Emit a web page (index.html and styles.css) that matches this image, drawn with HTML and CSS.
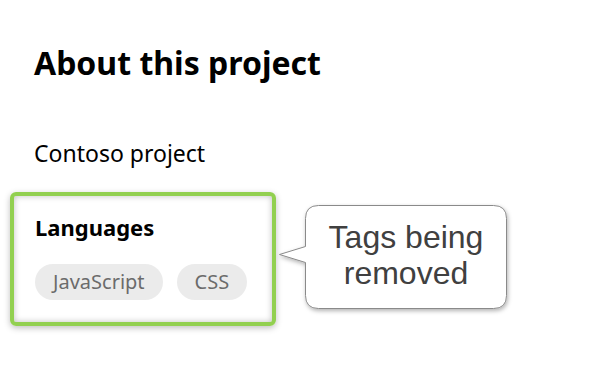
FILE: index.html
```html
<!DOCTYPE html>
<html lang="en">
  <head>
    <meta charset="UTF-8" />
    <meta name="viewport" content="width=device-width, initial-scale=1.0" />
    <title>About this project</title>
    <link rel="stylesheet" href="styles.css">
  </head>
  <body>
    <div class="panel">
      <h1>About this project</h1>
      <p class="name">Contoso project</p>

      <div class="highlight">
        <h2>Languages</h2>
        <div class="tags">
          <span class="tag">JavaScript</span>
          <span class="tag">CSS</span>
        </div>
      </div>

      <div class="callout">
        <svg class="callout-shape" width="240" height="120" viewBox="0 0 240 120">
          <defs>
            <filter id="shadow" x="-10%" y="-10%" width="130%" height="140%">
              <feDropShadow dx="1" dy="2" stdDeviation="2" flood-color="#000" flood-opacity="0.3" />
            </filter>
          </defs>
          <path d="M42.5 2.5 H217.5 Q230.5 2.5 230.5 15.5 V92.5 Q230.5 105.5 217.5 105.5 H42.5 Q29.5 105.5 29.5 92.5 V59.5 L3.5 51.5 L29.5 43.5 V15.5 Q29.5 2.5 42.5 2.5 Z"
            fill="#fff" stroke="#8a8a8a" stroke-width="1" filter="url(#shadow)" />
        </svg>
        <div class="callout-text">Tags being<br />removed</div>
      </div>
    </div>
  </body>
</html>
```

FILE: styles.css
```css
body {
  margin: 0;
  font-family: "Noto Sans", "Open Sans", sans-serif;
  background-color: #fff;
  color: #000;
}

.panel {
  position: relative;
  height: 385px;
  padding: 41px 0 0 10px;
  box-sizing: border-box;
}

h1 {
  margin: 0 0 0 24px;
  font-size: 32px;
  font-weight: 700;
  line-height: 44px;
}

.name {
  margin: 53px 0 0 24px;
  font-size: 23px;
  line-height: 30px;
}

.highlight {
  width: 266px;
  margin-top: 24px;
  padding: 16px 0 22px 21px;
  box-sizing: border-box;
  border: 4px solid #92d050;
  border-radius: 6px;
  box-shadow: inset 0 0 6px rgba(0, 0, 0, 0.25), 0 2px 6px rgba(0, 0, 0, 0.25);
}

h2 {
  margin: 0;
  font-size: 22px;
  font-weight: 700;
  line-height: 30px;
}

.tags {
  display: flex;
  gap: 14px;
  margin-top: 22px;
}

.tag {
  padding: 0 18px;
  height: 36px;
  line-height: 36px;
  border-radius: 18px;
  background-color: #ebebeb;
  color: #6b6b6b;
  font-size: 20px;
}

.callout {
  position: absolute;
  left: 276px;
  top: 203px;
  width: 240px;
  height: 120px;
}

.callout-shape {
  display: block;
}

.callout-text {
  position: absolute;
  left: 29px;
  top: 2px;
  width: 202px;
  height: 103px;
  padding-bottom: 4px;
  box-sizing: border-box;
  display: flex;
  align-items: center;
  justify-content: center;
  text-align: center;
  font-family: "Liberation Sans", Arial, sans-serif;
  font-size: 32px;
  line-height: 36px;
  color: #404040;
}
```
